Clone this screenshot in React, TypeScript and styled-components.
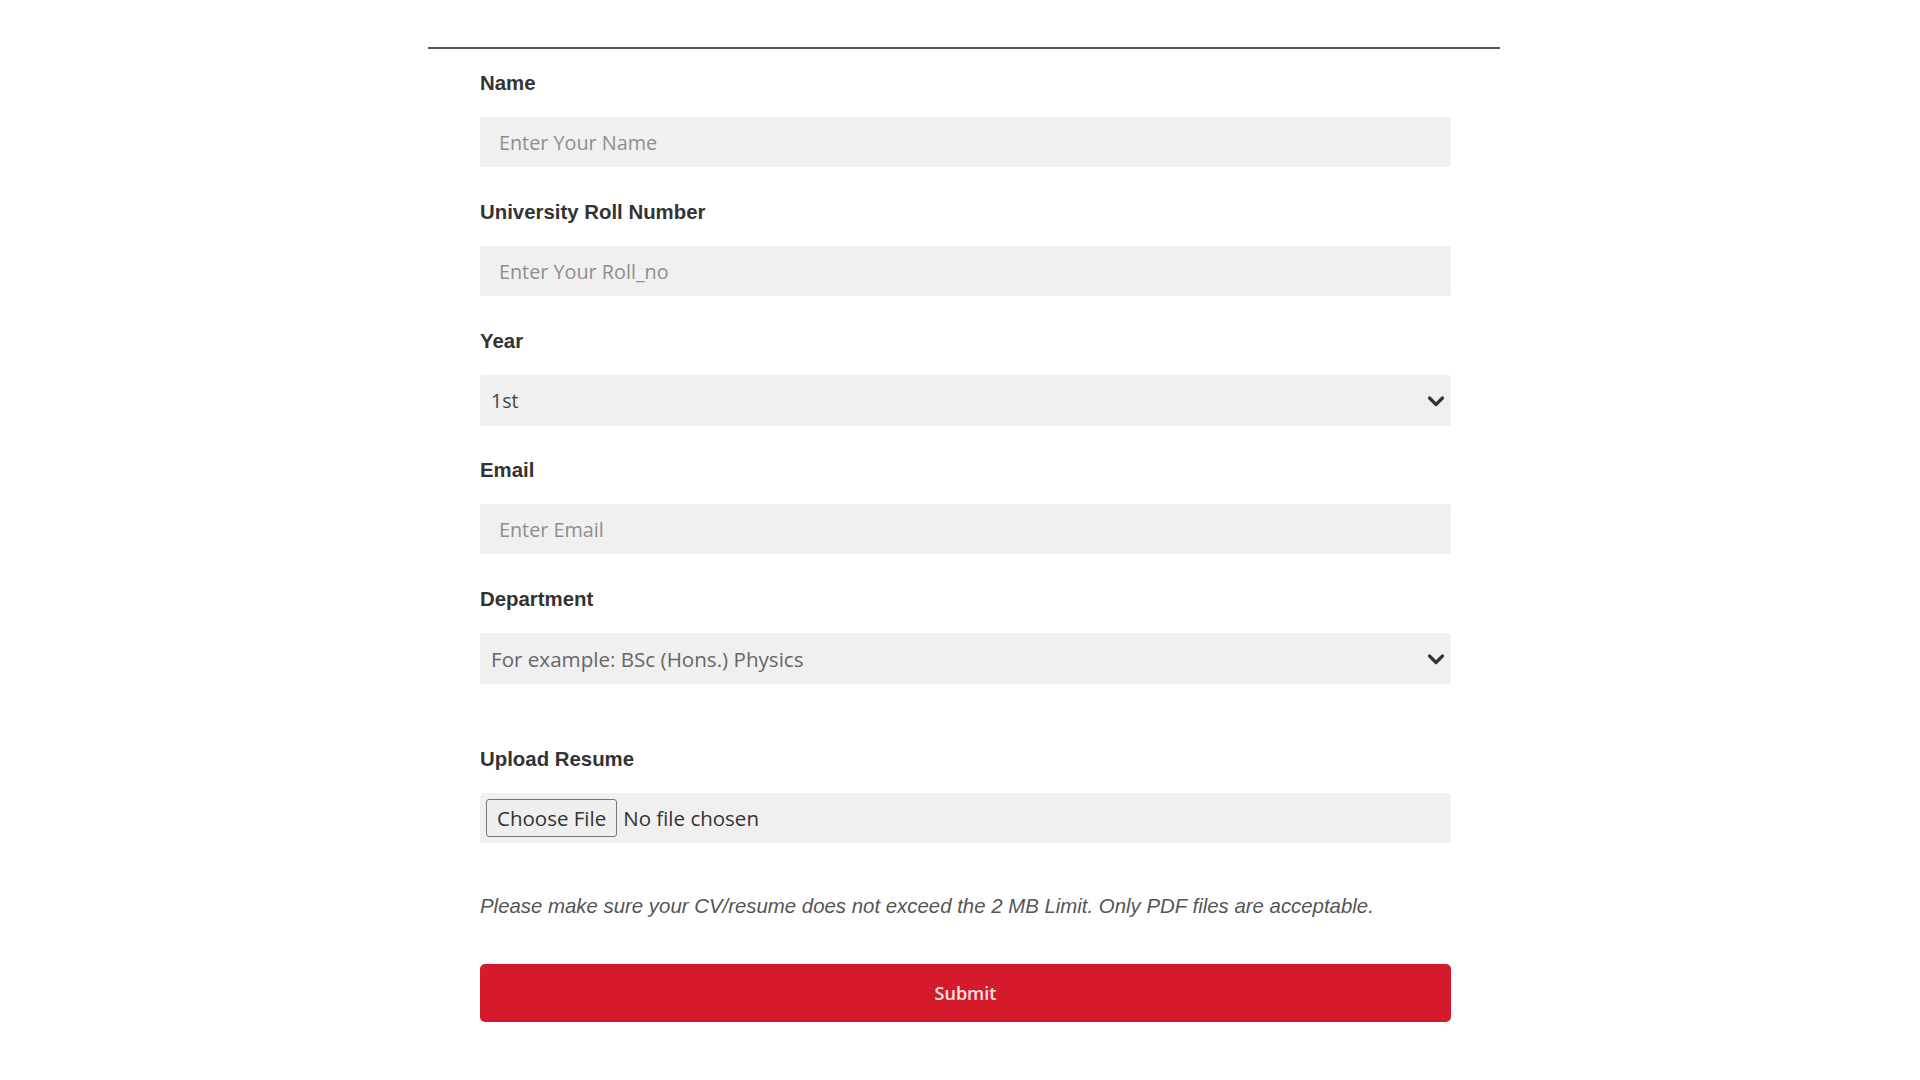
import React from "react";
import styled, { createGlobalStyle } from "styled-components";

const GlobalStyle = createGlobalStyle`
  html, body { margin: 0; padding: 0; background: #ffffff; }
  body { font-family: "Liberation Sans", Arial, sans-serif; }
  * { box-sizing: border-box; }
`;

const Page = styled.div`
  width: 1072px;
  margin-left: calc(50% - 532px);
  border-top: 2px solid #555555;
  margin-top: 47px;
  padding: 22px 49px 40px 52px;
`;

const Form = styled.form`
  display: flex;
  flex-direction: column;
`;

const Group = styled.div<{ $gapAfter?: number }>`
  display: flex;
  flex-direction: column;
  gap: 22px;
  margin-bottom: ${(p) => p.$gapAfter ?? 33}px;
`;

const Label = styled.label`
  font-family: "Liberation Sans", Arial, sans-serif;
  font-weight: 700;
  font-size: 20.4px;
  line-height: 24px;
  color: #333333;
`;

const TextInput = styled.input`
  height: 50px;
  width: 100%;
  border: none;
  border-radius: 3px;
  background: #f0f0f0;
  padding: 0 19px;
  font-family: "Open Sans", Lato, sans-serif;
  font-size: 19.8px;
  color: #444444;
  outline: none;
  &::placeholder { color: #8e8e8e; }
`;

const SelectWrap = styled.div`
  position: relative;
  height: 51px;
  background: #f0f0f0;
  border-radius: 3px;
`;

const Select = styled.select<{ $muted?: boolean }>`
  appearance: none;
  width: 100%;
  height: 100%;
  border: none;
  background: transparent;
  padding: 0 11px;
  font-family: "Open Sans", Lato, sans-serif;
  font-size: ${(p) => (p.$muted ? "20.6px" : "19.5px")};
  color: ${(p) => (p.$muted ? "#666666" : "#444444")};
  outline: none;
`;

const Chevron = styled.svg`
  position: absolute;
  right: 0px;
  top: 50%;
  transform: translateY(-50%);
  pointer-events: none;
`;

const FileBox = styled.div`
  height: 50px;
  background: #f0f0f0;
  border-radius: 3px;
  display: flex;
  align-items: center;
  padding: 0 6px;
  gap: 6px;
`;

const FileButton = styled.button`
  height: 38px;
  padding: 0 10px;
  border: 1px solid #767676;
  border-radius: 3px;
  background: #efefef;
  font-family: "Open Sans", "Noto Sans", sans-serif;
  font-size: 20.5px;
  color: #333333;
`;

const FileText = styled.span`
  font-family: "Open Sans", "Noto Sans", sans-serif;
  font-size: 20.5px;
  color: #333333;
`;

const Note = styled.p`
  margin: 51px 0 0;
  font-family: "Liberation Sans", Arial, sans-serif;
  font-style: italic;
  font-size: 20.4px;
  line-height: 24px;
  color: #555555;
`;

const Submit = styled.button`
  margin-top: 46px;
  height: 58px;
  width: 100%;
  border: none;
  border-radius: 5px;
  background: #d41a2b;
  color: #fbe4e6;
  font-family: "Open Sans", Lato, sans-serif;
  font-weight: 600;
  font-size: 18px;
`;

const ChevronIcon = () => (
  <Chevron width="30" height="20" viewBox="0 0 30 20">
    <path d="M8.5 7 L15 13.5 L21.5 7" fill="none" stroke="#333" strokeWidth="3.2" strokeLinecap="round" strokeLinejoin="round" />
  </Chevron>
);

export default function App() {
  return (
    <>
      <GlobalStyle />
      <Page>
        <Form onSubmit={(e) => e.preventDefault()}>
          <Group>
            <Label>Name</Label>
            <TextInput placeholder="Enter Your Name" />
          </Group>
          <Group>
            <Label>University Roll Number</Label>
            <TextInput placeholder="Enter Your Roll_no" />
          </Group>
          <Group $gapAfter={32}>
            <Label>Year</Label>
            <SelectWrap>
              <Select defaultValue="1st">
                <option>1st</option>
                <option>2nd</option>
                <option>3rd</option>
              </Select>
              <ChevronIcon />
            </SelectWrap>
          </Group>
          <Group>
            <Label>Email</Label>
            <TextInput placeholder="Enter Email" />
          </Group>
          <Group $gapAfter={63}>
            <Label>Department</Label>
            <SelectWrap>
              <Select $muted defaultValue="">
                <option value="">For example: BSc (Hons.) Physics</option>
              </Select>
              <ChevronIcon />
            </SelectWrap>
          </Group>
          <Group $gapAfter={0}>
            <Label>Upload Resume</Label>
            <FileBox>
              <FileButton type="button">Choose File</FileButton>
              <FileText>No file chosen</FileText>
            </FileBox>
          </Group>
          <Note>
            Please make sure your CV/resume does not exceed the 2 MB Limit. Only PDF files are acceptable.
          </Note>
          <Submit type="submit">Submit</Submit>
        </Form>
      </Page>
    </>
  );
}
